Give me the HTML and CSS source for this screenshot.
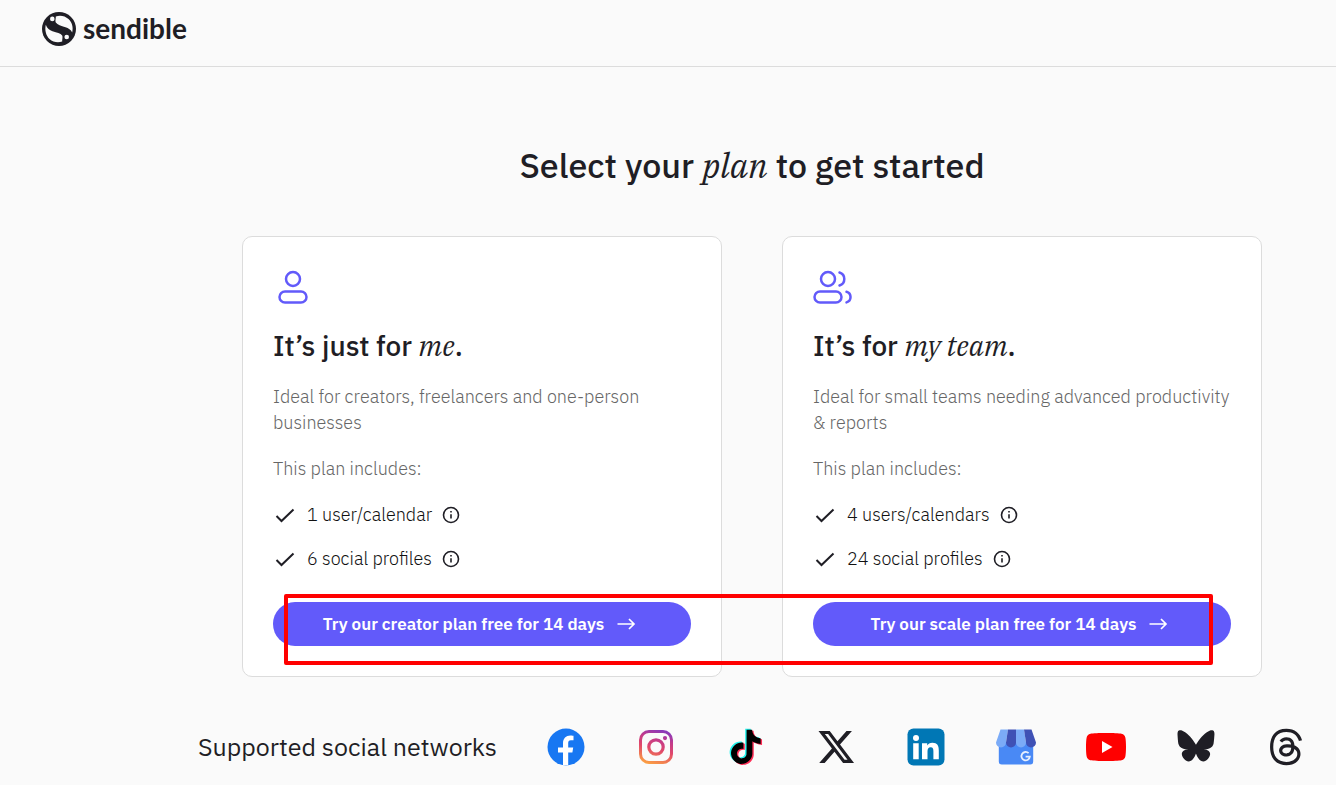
FILE: index.html
```html
<!DOCTYPE html>
<html lang="en">
<head>
    <meta charset="UTF-8">
    <meta name="viewport" content="width=device-width, initial-scale=1.0">
    <title>Sendible - Select your plan</title>
    <link rel="stylesheet" href="styles.css">
</head>
<body>

    <header class="header">
        <a class="logo" href="#">
            <svg class="logo-mark" viewBox="0 0 34 34" aria-hidden="true">
                <circle cx="17" cy="17" r="17" fill="#1f1e25"/>
                <path d="M13.800 4.500C18 2.800 23 3.800 26.500 7C30 10.200 31.500 15 30.200 20.500C28.800 17.500 26.500 16.200 23.500 15.200C19 13.700 15.500 13 13.800 10.500C12.900 8.800 14 6.500 13.800 4.500Z" fill="#fafafa"/>
                <path d="M20.200 29.500C16 31.200 11 30.200 7.500 27C4 23.800 2.500 18 3.800 12.800C5.200 16.500 7.500 18 10.500 19.200C15 20.800 18.500 21 20.200 23.500C21 25.200 20 27.500 20.200 29.500Z" fill="#fafafa"/>
                <circle cx="10.300" cy="6.900" r="2.300" fill="#fafafa"/>
                <circle cx="24.700" cy="25" r="2.300" fill="#fafafa"/>
            </svg>
            <span>sendible</span>
        </a>
    </header>

    <main class="main">
        <h1 class="title">Select your <em>plan</em> to get started</h1>

        <div class="plans">
            <section class="card">
                <svg class="card-icon" viewBox="0 0 40 40" aria-hidden="true">
                    <circle cx="20" cy="12" r="7"/>
                    <rect x="6.500" y="24.500" width="27" height="11" rx="5.500"/>
                </svg>
                <h2>It’s just for <em>me</em>.</h2>
                <p class="muted">Ideal for creators, freelancers and one-person businesses</p>
                <p class="muted">This plan includes:</p>
                <ul class="features">
                    <li>
                        <svg class="check" viewBox="0 0 24 24" aria-hidden="true"><path d="M3.500 13l5 5L20.500 6.500"/></svg>
                        1 user/calendar
                        <svg class="info" viewBox="0 0 18 18" aria-hidden="true"><circle cx="9" cy="9" r="7.500"/><path d="M9 8.200v4.300M9 5v1.600"/></svg>
                    </li>
                    <li>
                        <svg class="check" viewBox="0 0 24 24" aria-hidden="true"><path d="M3.500 13l5 5L20.500 6.500"/></svg>
                        6 social profiles
                        <svg class="info" viewBox="0 0 18 18" aria-hidden="true"><circle cx="9" cy="9" r="7.500"/><path d="M9 8.200v4.300M9 5v1.600"/></svg>
                    </li>
                </ul>
                <button class="btn" type="button">
                    Try our creator plan free for 14 days
                    <svg class="arrow" viewBox="0 0 24 12" aria-hidden="true"><path d="M.5 6h16.500M12 1l5 5-5 5"/></svg>
                </button>
            </section>

            <section class="card">
                <svg class="card-icon" viewBox="0 0 40 40" aria-hidden="true">
                    <circle cx="15" cy="12" r="7"/>
                    <path d="M26.500 5.500a6.800 6.800 0 0 1 0 13M33.500 24.800a5.500 5.500 0 0 1 0 10.600"/>
                    <rect x="1.500" y="24.500" width="27" height="11" rx="5.500"/>
                </svg>
                <h2>It’s for <em>my team</em>.</h2>
                <p class="muted">Ideal for small teams needing advanced productivity &amp; reports</p>
                <p class="muted">This plan includes:</p>
                <ul class="features">
                    <li>
                        <svg class="check" viewBox="0 0 24 24" aria-hidden="true"><path d="M3.500 13l5 5L20.500 6.500"/></svg>
                        4 users/calendars
                        <svg class="info" viewBox="0 0 18 18" aria-hidden="true"><circle cx="9" cy="9" r="7.500"/><path d="M9 8.200v4.300M9 5v1.600"/></svg>
                    </li>
                    <li>
                        <svg class="check" viewBox="0 0 24 24" aria-hidden="true"><path d="M3.500 13l5 5L20.500 6.500"/></svg>
                        24 social profiles
                        <svg class="info" viewBox="0 0 18 18" aria-hidden="true"><circle cx="9" cy="9" r="7.500"/><path d="M9 8.200v4.300M9 5v1.600"/></svg>
                    </li>
                </ul>
                <button class="btn" type="button">
                    Try our scale plan free for 14 days
                    <svg class="arrow" viewBox="0 0 24 12" aria-hidden="true"><path d="M.5 6h16.500M12 1l5 5-5 5"/></svg>
                </button>
            </section>

            <div class="highlight"></div>
        </div>

        <div class="networks">
            <p class="networks-label">Supported social networks</p>
            <div class="networks-icons">
                <!-- Facebook -->
                <svg viewBox="0 0 40 40" aria-hidden="true">
                    <circle cx="20" cy="20" r="18.500" fill="#1877f2"/>
                    <path d="M17 38.300V25.500h-5v-5h5v-4.200c0-5 3-7.800 7.400-7.800 1.500 0 3.100.3 3.100.3v4.500h-2.600c-2.100 0-2.700 1.300-2.700 2.700v4.500h5l-.8 5h-4.200v12.800z" fill="#fff"/>
                </svg>
                <!-- Instagram -->
                <svg viewBox="0 0 40 40" aria-hidden="true">
                    <defs>
                        <linearGradient id="ig" x1=".3" y1="1" x2=".6" y2="0">
                            <stop offset="0" stop-color="#fba043"/>
                            <stop offset=".45" stop-color="#e1486a"/>
                            <stop offset=".75" stop-color="#c13a8c"/>
                            <stop offset="1" stop-color="#8a3ab9"/>
                        </linearGradient>
                    </defs>
                    <path fill="url(#ig)" fill-rule="evenodd" d="M13 3h14a10 10 0 0 1 10 10v14a10 10 0 0 1-10 10H13A10 10 0 0 1 3 27V13A10 10 0 0 1 13 3zM13 6a7 7 0 0 0-7 7v14a7 7 0 0 0 7 7h14a7 7 0 0 0 7-7V13a7 7 0 0 0-7-7zM20 11.200a8.800 8.800 0 1 1 0 17.600 8.800 8.800 0 0 1 0-17.600zM20 14.400a5.600 5.600 0 1 0 0 11.200 5.600 5.600 0 0 0 0-11.200zM29 9a2.100 2.100 0 1 1 0 4.200 2.100 2.100 0 0 1 0-4.200z"/>
                </svg>
                <!-- TikTok -->
                <svg viewBox="0 0 40 40" aria-hidden="true">
                    <defs>
                        <path id="note" d="M12.525.02c1.310-.02 2.610-.01 3.910-.02.08 1.530.63 3.090 1.750 4.170 1.120 1.110 2.700 1.620 4.240 1.790v4.030c-1.440-.05-2.890-.35-4.200-.97-.57-.26-1.100-.59-1.620-.93-.01 2.920.01 5.840-.02 8.750-.08 1.400-.54 2.790-1.350 3.940-1.310 1.920-3.580 3.170-5.910 3.210-1.430.08-2.860-.31-4.080-1.030-2.020-1.190-3.440-3.370-3.650-5.710-.02-.5-.03-1-.01-1.490.18-1.900 1.120-3.720 2.580-4.960 1.660-1.440 3.980-2.130 6.150-1.720.02 1.480-.04 2.960-.04 4.440-.99-.32-2.150-.23-3.020.37-.63.41-1.110 1.040-1.360 1.750-.21.51-.15 1.070-.14 1.610.24 1.640 1.820 3.020 3.500 2.870 1.120-.01 2.190-.66 2.770-1.610.19-.33.4-.67.41-1.060.1-1.790.06-3.570.07-5.360.01-4.030-.01-8.050.02-12.070z"/>
                    </defs>
                    <use href="#note" transform="translate(1.400 1.800) scale(1.420)" fill="#25f4ee"/>
                    <use href="#note" transform="translate(4.200 3.800) scale(1.420)" fill="#fe2c55"/>
                    <use href="#note" transform="translate(2.800 2.800) scale(1.420)" fill="#000"/>
                </svg>
                <!-- X -->
                <svg viewBox="0 0 40 40" aria-hidden="true">
                    <path transform="translate(2.500 2.200) scale(1.480)" fill="#1f1e25" d="M18.901 1.153h3.680l-8.040 9.190L24 22.846h-7.406l-5.800-7.584-6.638 7.584H.474l8.600-9.830L0 1.154h7.594l5.243 6.932ZM17.610 20.644h2.039L6.486 3.240H4.298Z"/>
                </svg>
                <!-- LinkedIn -->
                <svg viewBox="0 0 40 40" aria-hidden="true">
                    <rect x="1.500" y="1.500" width="37" height="37" rx="6" fill="#0077b5"/>
                    <circle cx="10" cy="11" r="3" fill="#fff"/>
                    <path d="M7.200 16.200h5.500v16H7.200zM16 16.200h5.200v2.200c.8-1.500 2.700-2.700 5.200-2.700 5 0 6.400 3 6.400 7.700v8.800h-5.400v-7.800c0-2.200-.3-4.200-2.700-4.200-2.500 0-3.200 1.900-3.200 4.200v7.800H16z" fill="#fff"/>
                </svg>
                <!-- Google Business -->
                <svg viewBox="0 0 40 40" aria-hidden="true">
                    <path d="M2.800 15h34.400v19.500a3 3 0 0 1-3 3H5.800a3 3 0 0 1-3-3z" fill="#4989f5"/>
                    <path d="M4.500 2.500H12L10 15.500a5 5 0 0 1-10 0z" fill="#7babf7"/>
                    <path d="M12 2.500h8v13a5 5 0 0 1-10 0z" fill="#3f51b5"/>
                    <path d="M20 2.500h8l2 13a5 5 0 0 1-10 0z" fill="#7babf7"/>
                    <path d="M28 2.500h7.500l4.500 13a5 5 0 0 1-10 0z" fill="#3f51b5"/>
                    <path d="M32.600 26.200a4.200 4.200 0 1 0 1.200 3.400h-4.200" fill="none" stroke="#e8f0fe" stroke-width="1.800"/>
                </svg>
                <!-- YouTube -->
                <svg viewBox="0 0 40 40" aria-hidden="true">
                    <path d="M4.500 6.700C9 5.700 31 5.700 35.500 6.700c2.400.6 3.400 1.800 3.900 4 .8 4 .8 14.600 0 18.600-.5 2.200-1.500 3.400-3.900 4-4.500 1-26.500 1-31 0-2.400-.6-3.400-1.800-3.900-4-.8-4-.8-14.600 0-18.600.5-2.200 1.500-3.400 3.900-4z" fill="#f00"/>
                    <path d="M16 14l10.500 6L16 26z" fill="#fff"/>
                </svg>
                <!-- Bluesky -->
                <svg viewBox="0 0 40 40" aria-hidden="true">
                    <path transform="translate(1.500 1.200) scale(1.540)" fill="#1f1e25" d="M12 10.800c-1.087-2.114-4.046-6.053-6.798-7.995C2.566.944 1.561 1.266.902 1.565.139 1.908 0 3.080 0 3.768c0 .69.378 5.650.624 6.479.815 2.736 3.713 3.660 6.383 3.364-3.912.58-5.600 2.600-2.830 6.278 3.600 4.200 6.870-.313 7.823-3.508.953 3.195 4.223 7.708 7.823 3.508 2.770-3.678 1.082-5.698-2.830-6.278 2.670.297 5.568-.628 6.383-3.364.246-.828.624-5.790.624-6.478 0-.69-.139-1.861-.902-2.206-.659-.298-1.664-.62-4.300 1.240C16.046 4.748 13.087 8.687 12 10.800Z"/>
                </svg>
                <!-- Threads -->
                <svg viewBox="0 0 40 40" aria-hidden="true">
                    <path transform="translate(1.800 1.700) scale(1.520)" fill="#1f1e25" d="M12.186 24h-.007c-3.581-.024-6.334-1.205-8.184-3.509C2.350 18.440 1.500 15.586 1.472 12.010v-.017c.03-3.579.879-6.430 2.525-8.482C5.845 1.205 8.600.024 12.180 0h.014c2.746.02 5.043.725 6.826 2.098 1.677 1.290 2.858 3.130 3.509 5.467l-2.040.569c-1.104-3.960-3.898-5.984-8.304-6.015-2.910.022-5.110.936-6.540 2.717C4.307 6.504 3.616 8.914 3.589 12c.027 3.086.718 5.496 2.057 7.164 1.430 1.783 3.631 2.698 6.540 2.717 2.623-.02 4.358-.631 5.800-2.045 1.647-1.613 1.618-3.593 1.090-4.798-.31-.71-.873-1.300-1.634-1.750-.192 1.352-.622 2.446-1.284 3.272-.886 1.102-2.140 1.704-3.730 1.790-1.202.065-2.361-.218-3.259-.801-1.063-.689-1.685-1.740-1.752-2.964-.065-1.190.408-2.285 1.330-3.082.88-.76 2.119-1.207 3.583-1.291a13.853 13.853 0 0 1 3.020.142c-.126-.742-.375-1.332-.75-1.757-.513-.586-1.308-.883-2.359-.89h-.029c-.844 0-1.992.232-2.721 1.320L7.734 7.847c.98-1.454 2.568-2.256 4.478-2.256h.044c3.194.02 5.097 1.975 5.287 5.388.108.046.216.094.321.142 1.490.7 2.580 1.761 3.154 3.070.797 1.820.871 4.790-1.548 7.158-1.850 1.810-4.094 2.628-7.277 2.650Zm1.003-11.690c-.242 0-.487.007-.739.021-1.836.103-2.980.946-2.916 2.143.067 1.256 1.452 1.839 2.784 1.767 1.224-.065 2.818-.543 3.086-3.710a10.500 10.500 0 0 0-2.215-.221z"/>
                </svg>
            </div>
        </div>
    </main>

</body>
</html>
```
FILE: styles.css
```css
* {
    box-sizing: border-box;
}

body {
    margin: 0;
    background-color: #fafafa;
    color: #1f1e25;
    font-family: "IBM Plex Sans", Roboto, sans-serif;
    font-size: 18px;
    font-weight: 300;
    line-height: 26px;
}

h1, h2, p, ul {
    margin: 0;
}

em {
    font-family: "IBM Plex Serif", "Liberation Serif", serif;
    font-style: italic;
    font-weight: 400;
}

.header {
    display: flex;
    align-items: center;
    padding: 12px 42px 20px;
    border-bottom: 1px solid #dcdcdc;
}

.logo {
    display: flex;
    align-items: flex-start;
    gap: 7px;
    color: #1f1e25;
    font-family: Lato, sans-serif;
    font-size: 28px;
    font-weight: 700;
    line-height: 32px;
    text-decoration: none;
}

.logo-mark {
    width: 34px;
    height: 34px;
}

.main {
    margin-left: 168px;
    padding-top: 75px;
}

.title {
    margin-bottom: 48px;
    font-size: 34px;
    font-weight: 500;
    line-height: 46px;
    text-align: center;
}

.plans {
    position: relative;
    display: grid;
    grid-template-columns: 1fr 1fr;
    gap: 60px;
    max-width: 1020px;
    margin: 0 auto 50px;
}

.card {
    display: flex;
    flex-direction: column;
    gap: 20px;
    padding: 30px;
    background-color: #fff;
    border: 1px solid #dcdcdc;
    border-radius: 10px;
}

.card-icon {
    width: 40px;
    height: 40px;
    fill: none;
    stroke: #625afa;
    stroke-width: 2.5;
    stroke-linecap: round;
}

.card h2 {
    font-size: 28px;
    font-weight: 500;
    line-height: 37px;
}

.muted {
    color: #666;
}

.features {
    display: flex;
    flex-direction: column;
    gap: 18px;
    padding: 0;
    list-style: none;
}

.features li {
    display: flex;
    align-items: center;
    gap: 10px;
    color: #111;
}

.check {
    width: 24px;
    height: 24px;
    fill: none;
    stroke: #1f1e25;
    stroke-width: 2;
}

.info {
    width: 18px;
    height: 18px;
    fill: none;
    stroke: #1f1e25;
    stroke-width: 1.6;
}

.btn {
    display: flex;
    align-items: center;
    justify-content: center;
    gap: 13px;
    margin-top: 10px;
    padding: 9px 20px;
    border: none;
    border-radius: 22px;
    background-color: #625afa;
    color: #fff;
    font-family: inherit;
    font-size: 17px;
    font-weight: 600;
    line-height: 26px;
    cursor: pointer;
}

.arrow {
    width: 24px;
    height: 12px;
    fill: none;
    stroke: #fff;
    stroke-width: 1.7;
}

.highlight {
    position: absolute;
    top: 358px;
    right: 49px;
    bottom: 12px;
    left: 42px;
    border: 4px solid #f00;
    border-radius: 2px;
    pointer-events: none;
}

.networks {
    display: flex;
    align-items: center;
    justify-content: space-between;
    max-width: 1108px;
    margin: 0 auto;
    padding-bottom: 16px;
}

.networks-label {
    font-size: 25px;
    font-weight: 400;
    line-height: 40px;
}

.networks-icons {
    display: flex;
    gap: 50px;
}

.networks-icons svg {
    width: 40px;
    height: 40px;
}
```
